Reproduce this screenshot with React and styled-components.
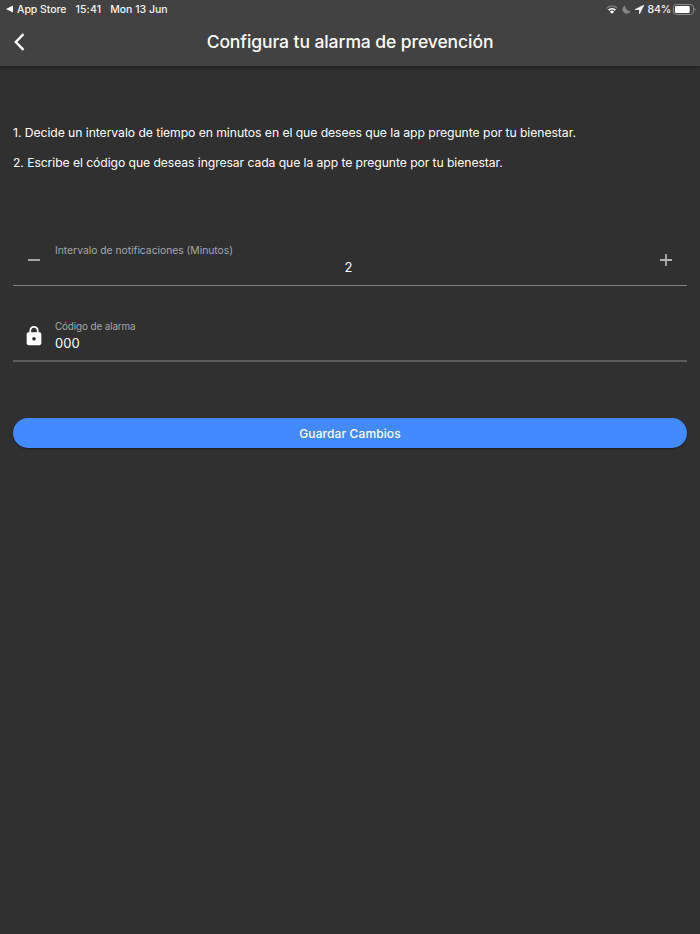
import React, { useState } from "react";
import styled, { createGlobalStyle } from "styled-components";

const GlobalStyle = createGlobalStyle`
  * { box-sizing: border-box; }
  body { margin: 0; background: #303030; }
`;

const Screen = styled.div`
  display: flex;
  flex-direction: column;
  height: 934px;
  background: #303030;
  color: #fff;
  font-family: Inter, "Liberation Sans", sans-serif;
`;

const Header = styled.header`
  height: 66px;
  background: #424242;
  box-shadow: 0 1px 4px rgba(0, 0, 0, 0.45);
`;

const StatusBar = styled.div`
  display: flex;
  justify-content: space-between;
  height: 18px;
  padding: 0 4px 0 6px;
  font-size: 10.5px;
  font-weight: 500;
  line-height: 18px;
  color: #f4f4f4;
`;

const StatusGroup = styled.div`
  display: flex;
  align-items: center;
`;

const StatusText = styled.span`
  white-space: nowrap;
  padding-top: 1px;
  margin-left: ${(p) => p.$gap || 0}px;
  letter-spacing: ${(p) => p.$spacing || 0}px;
`;

const StatusIcon = styled.svg`
  display: block;
  flex: none;
  margin-left: ${(p) => p.$gap || 0}px;
`;

const NavBar = styled.div`
  display: grid;
  grid-template-columns: 38px 1fr 38px;
  align-items: center;
  height: 48px;
`;

const BackButton = styled.button`
  display: flex;
  width: 38px;
  height: 38px;
  padding: 10px 0 0 12px;
  border: 0;
  background: none;
  color: #fff;
`;

const Title = styled.h1`
  margin: 0;
  text-align: center;
  font-size: 17.5px;
  line-height: 24px;
  font-weight: 500;
  letter-spacing: -0.08px;
`;

const Content = styled.main`
  display: flex;
  flex-direction: column;
  padding: 52px 13px 0;
`;

const Instruction = styled.p`
  margin: 0;
  height: ${(p) => p.$height}px;
  font-size: 12.2px;
  line-height: ${(p) => p.$height}px;
  white-space: nowrap;
  letter-spacing: ${(p) => p.$spacing}px;
`;

const Field = styled.div`
  display: grid;
  grid-template-columns: 42px 1fr 42px;
  height: ${(p) => p.$height}px;
  margin-top: ${(p) => p.$top}px;
  border-bottom: ${(p) => p.$line};
`;

const FieldIcon = styled.div`
  display: flex;
  justify-content: center;
  padding-top: ${(p) => p.$top}px;
  color: ${(p) => p.$color};
`;

const FieldBody = styled.div`
  display: flex;
  flex-direction: column;
`;

const Label = styled.label`
  height: 15px;
  font-size: ${(p) => p.$size}px;
  line-height: ${(p) => p.$line}px;
  color: #a6a6a6;
  letter-spacing: ${(p) => p.$spacing}px;
`;

const Value = styled.div`
  padding-right: ${(p) => (p.$align === "center" ? 3 : 0)}px;
  font-size: 13px;
  line-height: 18px;
  text-align: ${(p) => p.$align};
`;

const SaveButton = styled.button`
  height: 30px;
  margin-top: 56.4px;
  border: 0;
  border-radius: 15px;
  background: #448aff;
  box-shadow: 0 1px 2px rgba(0, 0, 0, 0.45);
  color: #fff;
  font: 500 12px/30px Inter, "Liberation Sans", sans-serif;
  letter-spacing: 0.1px;
`;

export default function App() {
  const [minutes, setMinutes] = useState(2);
  return (
    <Screen>
      <GlobalStyle />
      <Header>
        <StatusBar>
          <StatusGroup>
            <StatusIcon width="7" height="8" viewBox="0 0 7 8">
              <path d="M0 4 L7 0.5 V7.5 Z" fill="#fff" />
            </StatusIcon>
            <StatusText $gap={4} $spacing={-0.05}>App Store</StatusText>
            <StatusText $gap={9} $spacing={0.15}>15:41</StatusText>
            <StatusText $gap={9} $spacing={0}>Mon 13 Jun</StatusText>
          </StatusGroup>
          <StatusGroup>
            <StatusIcon width="12" height="9" viewBox="0 0 12 9" fill="none">
              <path d="M0.8 3.2 A7.4 7.4 0 0 1 11.2 3.2" stroke="#777" strokeWidth="1.5" />
              <path d="M2.6 5.2 A4.7 4.7 0 0 1 9.4 5.2" stroke="#fff" strokeWidth="1.7" />
              <path d="M3.9 6.7 A2.9 2.9 0 0 1 8.1 6.7 L6 8.8 Z" fill="#fff" />
            </StatusIcon>
            <StatusIcon $gap={4} width="9" height="9" viewBox="0 0 9 9">
              <path d="M3.2 0.3 A4.3 4.3 0 1 0 8.7 6 A5.2 5.2 0 0 1 3.2 0.3 Z" fill="#858585" />
            </StatusIcon>
            <StatusIcon $gap={4} width="9" height="9" viewBox="0 0 9 9">
              <path d="M8.8 0.2 L0.2 4.5 H4.5 V8.8 Z" fill="#fff" stroke="#fff" strokeWidth="0.7" strokeLinejoin="round" />
            </StatusIcon>
            <StatusText $gap={3.5} $spacing={-0.15}>84%</StatusText>
            <StatusIcon $gap={2} width="23" height="11" viewBox="0 0 23 11">
              <rect x="0.5" y="0.5" width="20" height="10" rx="2.8" fill="none" stroke="#8b8b8b" />
              <rect x="2" y="2" width="14.7" height="7" rx="1.3" fill="#fff" />
              <path d="M21.6 3.8 A2 2 0 0 1 21.6 7.2 Z" fill="#8b8b8b" />
            </StatusIcon>
          </StatusGroup>
        </StatusBar>
        <NavBar>
          <BackButton aria-label="Volver">
            <svg width="14" height="18" viewBox="0 0 14 18" fill="none">
              <path d="M11.5 1.2 L3.8 9 L11.5 16.8" stroke="currentColor" strokeWidth="2.4" />
            </svg>
          </BackButton>
          <Title>Configura tu alarma de prevención</Title>
        </NavBar>
      </Header>
      <Content>
        <Instruction $height={29} $spacing={-0.06}>
          1. Decide un intervalo de tiempo en minutos en el que desees que la app pregunte por tu bienestar.
        </Instruction>
        <Instruction $height={31} $spacing={-0.08}>
          2. Escribe el código que deseas ingresar cada que la app te pregunte por tu bienestar.
        </Instruction>
        <Field $top={65} $height={43} $line="1px solid #828282">
          <FieldIcon $top={10} $color="#b4b4b4" onClick={() => setMinutes(minutes - 1)}>
            <svg width="14" height="14" viewBox="0 0 14 14">
              <path d="M1 7 H13" stroke="currentColor" strokeWidth="1.8" />
            </svg>
          </FieldIcon>
          <FieldBody>
            <Label $size={10.3} $line={14} $spacing={0}>Intervalo de notificaciones (Minutos)</Label>
            <Value $align="center">{minutes}</Value>
          </FieldBody>
          <FieldIcon $top={10} $color="#b4b4b4" onClick={() => setMinutes(minutes + 1)}>
            <svg width="14" height="14" viewBox="0 0 14 14">
              <path d="M1 7 H13 M7 1 V13" stroke="currentColor" strokeWidth="1.8" />
            </svg>
          </FieldIcon>
        </Field>
        <Field $top={33} $height={43} $line="2px solid #5c5c5c">
          <FieldIcon $top={6} $color="#fff">
            <svg width="22" height="22" viewBox="0 0 24 24" fill="currentColor">
              <path d="M18 8h-1V6c0-2.76-2.24-5-5-5S7 3.24 7 6v2H6c-1.1 0-2 .9-2 2v10c0 1.1.9 2 2 2h12c1.1 0 2-.9 2-2V10c0-1.1-.9-2-2-2zm-6 9c-1.1 0-2-.9-2-2s.9-2 2-2 2 .9 2 2-.9 2-2 2zm3.1-9H8.9V6c0-1.71 1.39-3.1 3.1-3.1s3.1 1.39 3.1 3.1v2z" />
            </svg>
          </FieldIcon>
          <FieldBody>
            <Label $size={9.8} $line={16} $spacing={-0.08}>Código de alarma</Label>
            <Value $align="left">000</Value>
          </FieldBody>
        </Field>
        <SaveButton>Guardar Cambios</SaveButton>
      </Content>
    </Screen>
  );
}
